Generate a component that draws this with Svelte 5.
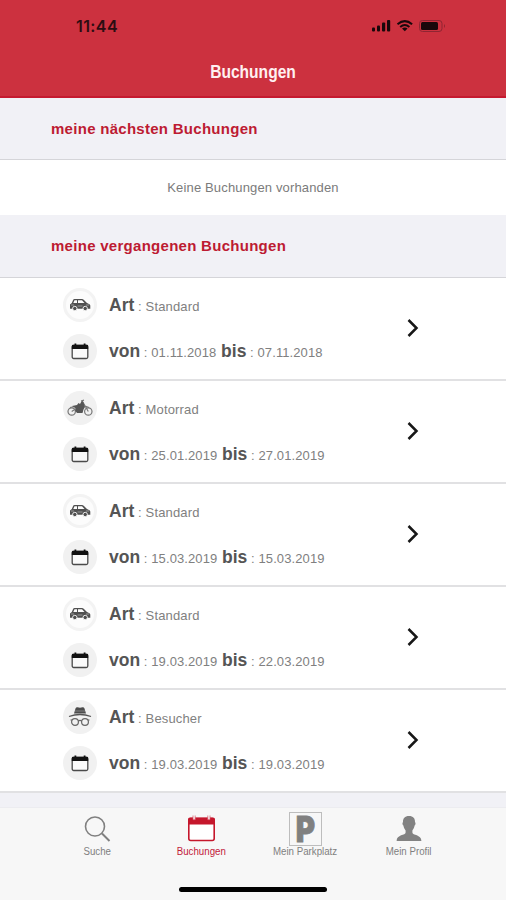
<script>
  const bookings = [
    { kind: 'Standard', icon: 'car', from: '01.11.2018', to: '07.11.2018' },
    { kind: 'Motorrad', icon: 'motorbike', from: '25.01.2019', to: '27.01.2019' },
    { kind: 'Standard', icon: 'car', from: '15.03.2019', to: '15.03.2019' },
    { kind: 'Standard', icon: 'car', from: '19.03.2019', to: '22.03.2019' },
    { kind: 'Besucher', icon: 'visitor', from: '19.03.2019', to: '19.03.2019' }
  ];
</script>

<div class="screen">
  <header>
    <div class="status">
      <span class="time">11:44</span>
      <svg class="signals" width="76" height="16" viewBox="0 0 76 16">
        <g fill="#19080b">
          <rect x="1" y="9.500" width="3" height="4" rx="1" />
          <rect x="6" y="7.500" width="3" height="6" rx="1" />
          <rect x="11" y="4.500" width="3.200" height="9" rx="1" />
          <rect x="16" y="2" width="3.200" height="11.500" rx="1" />
          <rect x="50" y="4" width="17" height="8" rx="1.500" />
          <path d="M31 10.500q2.800-2 5.600 0L33.800 13.200z" />
        </g>
        <g fill="none" stroke="#19080b" stroke-width="2">
          <path d="M26.500 6.200q7.300-6.200 14.600 0M29.200 8.900q4.600-3.800 9.200 0" />
        </g>
        <rect x="48.500" y="2.500" width="22.500" height="11" rx="3" fill="none" stroke="#8f2532" stroke-width="1" />
        <path d="M73 6q2 2 0 4z" fill="#8f2532" />
      </svg>
    </div>
    <h1>Buchungen</h1>
  </header>

  <main>
    <h2 class="next">meine nächsten Buchungen</h2>
    <p class="empty">Keine Buchungen vorhanden</p>
    <h2 class="past">meine vergangenen Buchungen</h2>

    <ul>
      {#each bookings as b}
        <li>
          <div class="details">
            <div class="line">
              <span class="bubble" class:light={b.icon === 'car'}>
                {#if b.icon === 'car'}
                  <svg width="22" height="16" viewBox="0 0 22 16">
                    <path fill="#505050" fill-rule="evenodd" d="M1 7.500L2.800 6 4.200 2.700Q4.500 2 5.500 2H13q1 0 1.700.7L18 6l2.500 1.200q.8.500.8 1.500v3H1zM5.500 3.300L4.300 6H8V3.300zM9 3.300V6h6.500L13 3.300z" />
                    <circle cx="5.800" cy="11.500" r="2.200" fill="#505050" stroke="#fafafa" stroke-width=".9" />
                    <circle cx="16.200" cy="11.500" r="2.200" fill="#505050" stroke="#fafafa" stroke-width=".9" />
                    <path d="M8.500 9h5M2 8h3M17 8h3" stroke="#aaa" stroke-width=".8" />
                  </svg>
                {:else if b.icon === 'motorbike'}
                  <svg width="26" height="18" viewBox="0 0 26 18">
                    <g fill="none" stroke="#777" stroke-width="1.200">
                      <circle cx="4.700" cy="12.500" r="3.700" />
                      <circle cx="21.300" cy="12.500" r="3.700" />
                      <path d="M4.700 12.500L10 9M15.500 2.500L21.300 12.500M14 2l3-.8M3 8.500l5-1M18 7l4 1.500" />
                    </g>
                    <path fill="#555" d="M5 7l5-1 1.500-2 1.500 1 2-3.500 1.500 2L18 8l-1.500 2.500L15.500 14H10L8 11.500l1-2z" />
                  </svg>
                {:else}
                  <svg width="26" height="22" viewBox="0 0 26 22">
                    <path fill="#4c4c4c" d="M7 7.500L8.500 2.500Q9 1 10.500 1.200L13 1.700l2.500-.5Q17 1 17.500 2.500L19 7.500z" />
                    <path d="M8 5h10" stroke="#999" stroke-width=".7" />
                    <path d="M2 10.500q11-4 22 0" fill="none" stroke="#555" stroke-width="1.300" />
                    <g fill="none" stroke="#666" stroke-width="1.200">
                      <circle cx="8" cy="16" r="3.400" />
                      <circle cx="18" cy="16" r="3.400" />
                      <path d="M11.200 15.200q1.800-1.500 3.600 0M3.500 14h1.700M20.800 14h1.700" />
                    </g>
                  </svg>
                {/if}
              </span>
              <span class="text"><b>Art</b><span class="value kind">{` : ${b.kind}`}</span></span>
            </div>
            <div class="line">
              <span class="bubble">
                <svg width="18" height="17" viewBox="0 0 18 17">
                  <rect x="1.200" y="2.500" width="15.600" height="13" rx="1.500" fill="#fafafa" stroke="#4a4a4a" stroke-width="1.300" />
                  <path d="M.8 6V3q0-1.200 1.200-1.200h14q1.200 0 1.200 1.200v3zM3.500.5h1.800v2H3.500zM12.700.5h1.800v2h-1.800z" fill="#111" />
                </svg>
              </span>
              <span class="text"><b>von</b><span class="value date">{` : ${b.from} `}</span><b class="bis">bis</b><span class="value date">{` : ${b.to}`}</span></span>
            </div>
          </div>
          <svg class="chevron" width="14" height="20" viewBox="0 0 14 20">
            <path d="M2.500 2L10.500 10L2.500 18" fill="none" stroke="#171717" stroke-width="2.500" />
          </svg>
        </li>
      {/each}
    </ul>
  </main>

  <nav>
    <div class="tabs">
      <div class="tab">
        <svg width="34" height="34" viewBox="0 0 34 34" fill="none" stroke="#808080">
          <circle cx="15" cy="14.500" r="9.500" stroke-width="1.600" />
          <path d="M22 21.500l7.500 7.500" stroke-width="2" />
        </svg>
        <span>Suche</span>
      </div>
      <div class="tab active">
        <svg width="34" height="34" viewBox="0 0 34 34">
          <rect x="4.800" y="6.500" width="25.400" height="22" rx="2" fill="#fff" stroke="#c5172c" stroke-width="1.600" />
          <path d="M4 12.500V7.500q0-2 2-2h23q2 0 2 2v5z" fill="#c5172c" />
          <path d="M9 3.500v4.200h2.200V3.500M23.800 3.500v4.200H26V3.500" fill="#f7f7f7" stroke="#d85262" stroke-width=".7" />
        </svg>
        <span>Buchungen</span>
      </div>
      <div class="tab">
        <div class="parking"><b>P</b></div>
        <span>Mein Parkplatz</span>
      </div>
      <div class="tab">
        <svg width="34" height="34" viewBox="0 0 34 34" fill="#828282">
          <path d="M17 4c4.200 0 6.200 2.500 6 6.200 1 .3.500 2.800-.4 3.400-.4 2.200-1.100 3.600-2.200 4.800v2.200c0 3 9 1.800 9 8.400H4.600c0-6.600 9-5.400 9-8.400v-2.200c-1.100-1.200-1.800-2.600-2.200-4.800-.9-.6-1.400-3.100-.4-3.400C10.800 6.500 12.800 4 17 4z" />
        </svg>
        <span>Mein Profil</span>
      </div>
    </div>
    <div class="home"></div>
  </nav>
</div>

<style>
  :global(body) { margin: 0; }
  .screen {
    width: 506px;
    height: 900px;
    display: flex;
    flex-direction: column;
    overflow: hidden;
    background: #f1f1f6;
    font-family: "Liberation Sans", Arial, sans-serif;
  }
  header {
    height: 98px;
    flex: none;
    box-sizing: border-box;
    background: #cc313f;
    border-bottom: 2px solid #c51a30;
  }
  .status {
    display: flex;
    justify-content: space-between;
    align-items: center;
    padding: 16px 59px 0 76px;
    height: 20px;
  }
  .time {
    font: 600 16px/20px Inter, sans-serif;
    letter-spacing: .4px;
    color: #2c0d12;
  }
  h1 {
    margin: 24px 0 0;
    text-align: center;
    font-size: 19px;
    line-height: 24px;
    color: #fff0f1;
    transform: scaleX(.82);
  }
  h2 {
    margin: 0;
    box-sizing: border-box;
    height: 62px;
    padding-left: 51px;
    border-bottom: 1px solid #d5d5d9;
    font-size: 15px;
    line-height: 61px;
    letter-spacing: .28px;
    color: #bd1b32;
    white-space: nowrap;
  }
  .past { height: 63px; }
  .empty {
    margin: 0;
    height: 55px;
    background: #fff;
    text-align: center;
    font-size: 13px;
    line-height: 56px;
    letter-spacing: .15px;
    color: #7b7b7b;
  }
  ul { list-style: none; margin: 0; padding: 0; }
  li {
    height: 103px;
    box-sizing: border-box;
    display: flex;
    justify-content: space-between;
    padding: 10px 86px 0 63px;
    background: #fff;
    border-bottom: 2px solid #e1e1e3;
  }
  .line { display: flex; align-items: center; height: 34px; margin-bottom: 12px; }
  .bubble {
    width: 34px;
    height: 34px;
    flex: none;
    display: flex;
    align-items: center;
    justify-content: center;
    border-radius: 50%;
    background: #f1f1f1;
  }
  .bubble.light {
    background: #fcfcfc;
    border: 3px solid #f3f3f3;
    box-sizing: border-box;
  }
  .text { margin: 1px 0 0 12px; white-space: pre; line-height: 24px; }
  b { font-size: 17.500px; color: #555; }
  .bis { margin-left: 1px; }
  .value { font-size: 13px; color: #808080; }
  .kind { letter-spacing: .15px; }
  .date { letter-spacing: .1px; }
  .chevron { margin-top: 30px; }
  nav {
    flex: 1;
    margin-top: 14px;
    border-top: 1px solid #ececf0;
    background: #f7f7f7;
  }
  .tabs { display: flex; padding: 4px 45px 0; }
  .tab {
    width: 104px;
    display: flex;
    flex-direction: column;
    align-items: center;
    color: #808080;
  }
  .tab span {
    font-size: 10px;
    line-height: 12px;
    white-space: nowrap;
    transform: scaleX(.97);
  }
  .tab.active { color: #c2203a; }
  .parking {
    width: 33px;
    height: 34px;
    box-sizing: border-box;
    border: 1px solid #bdbdbd;
    text-align: center;
  }
  .parking b {
    display: block;
    font: 900 35px/33px Inter, sans-serif;
    color: #808080;
    -webkit-text-stroke: .8px #808080;
    transform: scaleX(.84);
  }
  .home {
    width: 148px;
    height: 5px;
    margin: 29px auto 0;
    border-radius: 3px;
    background: #000;
  }
</style>
